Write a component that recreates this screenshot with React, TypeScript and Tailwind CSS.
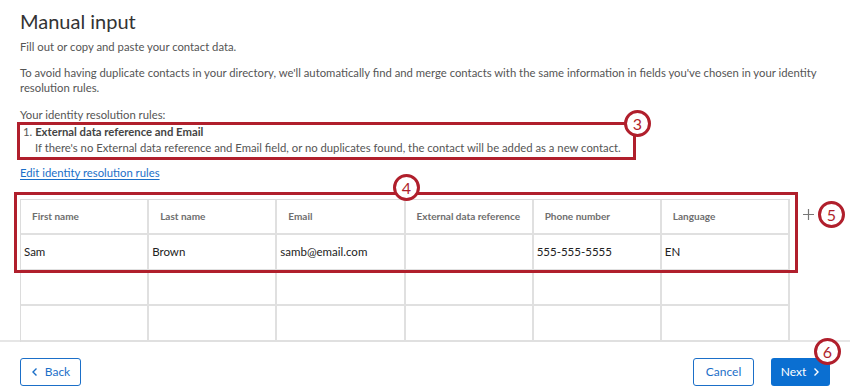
import React from "react";

const columns = ["First name", "Last name", "Email", "External data reference", "Phone number", "Language"];
const rows = [
  ["Sam", "Brown", "samb@email.com", "", "555-555-5555", "EN"],
  ["", "", "", "", "", ""],
  ["", "", "", "", "", ""],
];

// red numbered callout
function Badge({ n, className = "" }: { n: number; className?: string }) {
  return (
    <div
      className={`flex h-[27px] w-[27px] shrink-0 items-center justify-center rounded-full border-[3px] border-[#b01f2c] bg-white text-[16px] leading-none text-[#b01f2c] ${className}`}
    >
      {n}
    </div>
  );
}

export default function App() {
  return (
    <div className="relative flex h-[392px] w-[850px] flex-col overflow-hidden bg-white font-['Lato',sans-serif] text-[#555]">
      <div className="px-5">
        <h1 className="pt-[7px] text-[20px] leading-[28px] font-normal text-[#333]">Manual input</h1>
        <p className="mt-[4px] text-[11.3px] leading-[16px]">Fill out or copy and paste your contact data.</p>
        <p className="mt-[10px] text-[11.3px] leading-[15px]">
          To avoid having duplicate contacts in your directory, we'll automatically find and merge contacts with the same information in fields you've chosen in your identity resolution rules.
        </p>
        <p className="mt-[12px] text-[11.3px] leading-[15px]">Your identity resolution rules:</p>

        <div className="relative ml-[-3px] w-[619px] border-[3px] border-[#b01f2c] pb-[2px] pl-[3px] text-[11.3px]">
          <div className="leading-[14px]">
            1. <span className="font-bold text-[#444]">External data reference and Email</span>
          </div>
          <div className="mt-[2px] pl-[12px] leading-[14px]">
            If there's no External data reference and Email field, or no duplicates found, the contact will be added as a new contact.
          </div>
          <Badge n={3} className="absolute -top-[15px] -right-[18px]" />
        </div>

        <a href="#" className="mt-[5px] block w-fit text-[11.3px] leading-[15px] text-[#1b6fc8] underline underline-offset-2">
          Edit identity resolution rules
        </a>

        <div className="mt-[19px] flex items-start">
          <div className="relative h-[141px] w-[770px] shrink-0">
            <div className="grid grid-cols-6 border-t border-l border-[#dcdcdc]">
              {columns.map((c) => (
                <div
                  key={c}
                  className="flex h-[35px] items-center border-r-2 border-b-2 border-[#e0e0e0] pl-[11px] text-[10px] font-bold text-[#6e6e6e]"
                >
                  {c}
                </div>
              ))}
              {rows.map((r, i) =>
                r.map((v, j) => (
                  <div
                    key={`${i}-${j}`}
                    className="flex h-[35.5px] items-center border-r-2 border-b-2 border-[#e0e0e0] pl-[3px] text-[11.5px] text-[#222]"
                  >
                    {v}
                  </div>
                ))
              )}
            </div>
            <div className="pointer-events-none absolute -top-[7px] -left-[6px] h-[81px] w-[784px] border-[3px] border-[#b01f2c]" />
            <Badge n={4} className="absolute -top-[25px] left-[373px]" />
          </div>
          <div className="mt-[2px] ml-[13px] flex h-[27px] items-center gap-[4px]">
            <svg width="11" height="11" viewBox="0 0 11 11" stroke="#777" strokeWidth="1.2">
              <path d="M5.5 0v11M0 5.5h11" />
            </svg>
            <Badge n={5} />
          </div>
        </div>
      </div>

      <div className="flex items-center justify-between border-t-2 border-[#e6e6e6] px-5 pt-[16px]">
        <button className="flex h-[28px] w-[61px] items-center justify-center gap-[6px] rounded-[3px] border border-[#1b6fc8] text-[12px] text-[#1b6fc8]">
          <svg width="8" height="10" viewBox="0 0 8 10" fill="none" stroke="currentColor" strokeWidth="1.4">
            <path d="M5.5 1.5L2 5l3.5 3.5" />
          </svg>
          Back
        </button>
        <div className="flex gap-[17px]">
          <button className="flex h-[28px] w-[61px] items-center justify-center rounded-[3px] border border-[#1b6fc8] text-[12px] text-[#1b6fc8]">
            Cancel
          </button>
          <div className="relative">
            <button className="flex h-[28px] w-[59px] items-center justify-center gap-[6px] rounded-[3px] bg-[#0b6fd1] text-[12px] text-white">
              Next
              <svg width="8" height="10" viewBox="0 0 8 10" fill="none" stroke="currentColor" strokeWidth="1.4">
                <path d="M2.5 1.5L6 5 2.5 8.5" />
              </svg>
            </button>
            <Badge n={6} className="absolute -top-[20px] left-[43px]" />
          </div>
        </div>
      </div>
    </div>
  );
}
